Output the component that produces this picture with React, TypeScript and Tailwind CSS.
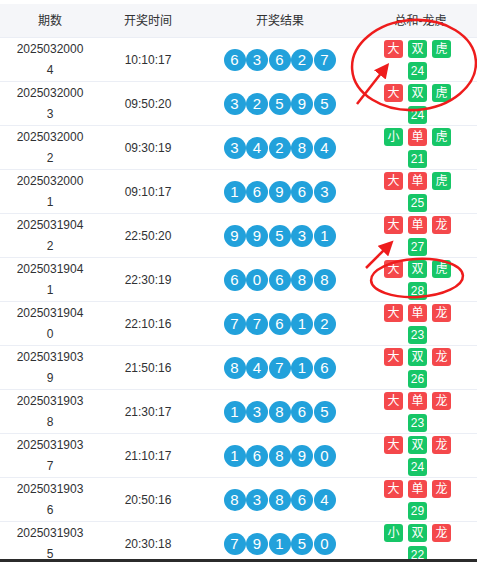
import React from "react";

type Draw = {
  issue: string;
  time: string;
  balls: number[];
  tags: string[];
  sum: number;
};

const draws: Draw[] = [
  { issue: "20250320004", time: "10:10:17", balls: [6, 3, 6, 2, 7], tags: ["大", "双", "虎"], sum: 24 },
  { issue: "20250320003", time: "09:50:20", balls: [3, 2, 5, 9, 5], tags: ["大", "双", "虎"], sum: 24 },
  { issue: "20250320002", time: "09:30:19", balls: [3, 4, 2, 8, 4], tags: ["小", "单", "虎"], sum: 21 },
  { issue: "20250320001", time: "09:10:17", balls: [1, 6, 9, 6, 3], tags: ["大", "单", "虎"], sum: 25 },
  { issue: "20250319042", time: "22:50:20", balls: [9, 9, 5, 3, 1], tags: ["大", "单", "龙"], sum: 27 },
  { issue: "20250319041", time: "22:30:19", balls: [6, 0, 6, 8, 8], tags: ["大", "双", "虎"], sum: 28 },
  { issue: "20250319040", time: "22:10:16", balls: [7, 7, 6, 1, 2], tags: ["大", "单", "龙"], sum: 23 },
  { issue: "20250319039", time: "21:50:16", balls: [8, 4, 7, 1, 6], tags: ["大", "双", "龙"], sum: 26 },
  { issue: "20250319038", time: "21:30:17", balls: [1, 3, 8, 6, 5], tags: ["大", "单", "龙"], sum: 23 },
  { issue: "20250319037", time: "21:10:17", balls: [1, 6, 8, 9, 0], tags: ["大", "双", "龙"], sum: 24 },
  { issue: "20250319036", time: "20:50:16", balls: [8, 3, 8, 6, 4], tags: ["大", "单", "龙"], sum: 29 },
  { issue: "20250319035", time: "20:30:18", balls: [7, 9, 1, 5, 0], tags: ["小", "双", "龙"], sum: 22 },
];

// 大 / 单 / 龙 are red, the rest green
const isRed = (t: string) => t === "大" || t === "单" || t === "龙";

const cols = "grid grid-cols-[100px_96px_164px_1fr]";

const Tag: React.FC<{ text: string; red?: boolean }> = ({ text, red }) => (
  <span
    className={`w-[19px] h-[18px] rounded-[3px] flex items-center justify-center text-white text-[12px] leading-none ${
      red ? "bg-[#f4484b]" : "bg-[#17c667]"
    }`}
  >
    {text}
  </span>
);

const Row: React.FC<{ d: Draw }> = ({ d }) => (
  <div className={`${cols} h-[44px] border-b border-[#ebeef5] items-center text-[12px] text-[#303133]`}>
    <div className="flex flex-col items-center leading-[21px]">
      <span>{d.issue.slice(0, 10)}</span>
      <span>{d.issue.slice(10)}</span>
    </div>
    <div className="text-center">{d.time}</div>
    <div className="flex justify-center gap-[0.5px] pl-[3px]">
      {d.balls.map((b, i) => (
        <span
          key={i}
          className="w-[22px] h-[22px] rounded-full bg-[#22a1db] text-white text-[15px] flex items-center justify-center leading-none"
        >
          {b}
        </span>
      ))}
    </div>
    <div className="flex flex-col items-center gap-[4px] pr-[2px]">
      <div className="flex gap-[5px]">
        {d.tags.map((t) => (
          <Tag key={t} text={t} red={isRed(t)} />
        ))}
      </div>
      <Tag text={String(d.sum)} />
    </div>
  </div>
);

const Annotations: React.FC = () => (
  <svg
    className="absolute inset-0 pointer-events-none"
    width={477}
    height={562}
    viewBox="0 0 477 562"
  >
    <defs>
      <marker id="head" markerWidth="6" markerHeight="6" refX="4" refY="3" orient="auto">
        <path d="M0,0 L6,3 L0,6 Z" fill="#ee1c1c" />
      </marker>
    </defs>
    <ellipse cx="414" cy="65" rx="62" ry="45" fill="none" stroke="#ee1c1c" strokeWidth="2.5" transform="rotate(-4 414 65)" />
    <line x1="357" y1="104" x2="386" y2="67" stroke="#ee1c1c" strokeWidth="2.5" markerEnd="url(#head)" />
    <line x1="366" y1="268" x2="390" y2="244" stroke="#ee1c1c" strokeWidth="2.5" markerEnd="url(#head)" />
    <ellipse cx="417" cy="278" rx="46" ry="19" fill="none" stroke="#ee1c1c" strokeWidth="2.5" transform="rotate(-3 417 278)" />
  </svg>
);

export default function App() {
  return (
    <div
      className="relative w-[477px] h-[562px] bg-white overflow-hidden"
      style={{ fontFamily: '"Liberation Sans", "Noto Sans CJK SC", sans-serif' }}
    >
      <div className="h-[559px] overflow-hidden pt-[4px]">
        <div className={`${cols} h-[34px] bg-[#f5f6f9] border-b border-[#ebeef5] items-center text-[12px] text-[#303133]`}>
          <div className="text-center">期数</div>
          <div className="text-center">开奖时间</div>
          <div className="text-center pl-[4px]">开奖结果</div>
          <div className="text-center pl-[4px]">总和-龙虎</div>
        </div>
        {draws.map((d) => (
          <Row key={d.issue} d={d} />
        ))}
      </div>
      <div className="h-[3px] bg-[#2b2b2b]" />
      <Annotations />
    </div>
  );
}
